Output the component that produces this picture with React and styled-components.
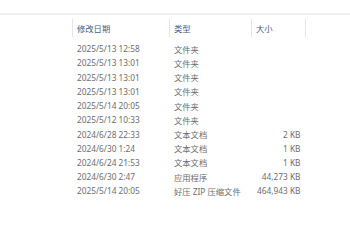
import React from 'react';
import styled, { createGlobalStyle } from 'styled-components';

const GlobalStyle = createGlobalStyle`
  body {
    margin: 0;
    background: #ffffff;
    font-family: "Noto Sans", "Noto Sans CJK SC", sans-serif;
  }
`;

const files = [
  { date: '2025/5/13 12:58', type: '文件夹', size: '' },
  { date: '2025/5/13 13:01', type: '文件夹', size: '' },
  { date: '2025/5/13 13:01', type: '文件夹', size: '' },
  { date: '2025/5/13 13:01', type: '文件夹', size: '' },
  { date: '2025/5/14 20:05', type: '文件夹', size: '' },
  { date: '2025/5/12 10:33', type: '文件夹', size: '' },
  { date: '2024/6/28 22:33', type: '文本文档', size: '2 KB' },
  { date: '2024/6/30 1:24', type: '文本文档', size: '1 KB' },
  { date: '2024/6/24 21:53', type: '文本文档', size: '1 KB' },
  { date: '2024/6/30 2:47', type: '应用程序', size: '44,273 KB' },
  { date: '2025/5/14 20:05', type: '好压 ZIP 压缩文件', size: '464,943 KB' },
];

const App = () => {
  return (
    <Window>
      <GlobalStyle />
      <TopBar />
      <List>
        <HeaderRow>
          <HeaderCell>修改日期</HeaderCell>
          <HeaderCell>类型</HeaderCell>
          <HeaderCell>大小</HeaderCell>
        </HeaderRow>
        <Body>
          {files.map((f, i) => (
            <Row key={i}>
              <Cell>{f.date}</Cell>
              <Cell>{f.type}</Cell>
              <Cell $right>{f.size}</Cell>
            </Row>
          ))}
        </Body>
      </List>
    </Window>
  );
};

export default App;

const Window = styled.div`
  width: 350px;
  height: 250px;
  background: #ffffff;
  overflow: hidden;
`;

const TopBar = styled.div`
  height: 13px;
  border-bottom: 2px solid #f0f0f0;
`;

const List = styled.div`
  padding: 4px 0 0 72px;
`;

const columns = '97px 82px 53.5px';

const HeaderRow = styled.div`
  display: grid;
  grid-template-columns: ${columns};
  height: 18px;
  border-right: 1px solid #e5e5e5;
  width: max-content;
`;

const HeaderCell = styled.div`
  display: flex;
  align-items: center;
  padding-left: 4px;
  border-left: 1px solid #e5e5e5;
  font-size: 8.3px;
  color: #4c607a;
`;

const Body = styled.div`
  padding-top: 4.6px;
`;

const Row = styled.div`
  display: grid;
  grid-template-columns: ${columns};
  height: 14.22px;
  align-items: center;
`;

const Cell = styled.div`
  padding: 0 4px 0 5px;
  font-size: 8.3px;
  color: #6d6d6d;
  white-space: nowrap;
  text-align: ${(props) => (props.$right ? 'right' : 'left')};
`;
